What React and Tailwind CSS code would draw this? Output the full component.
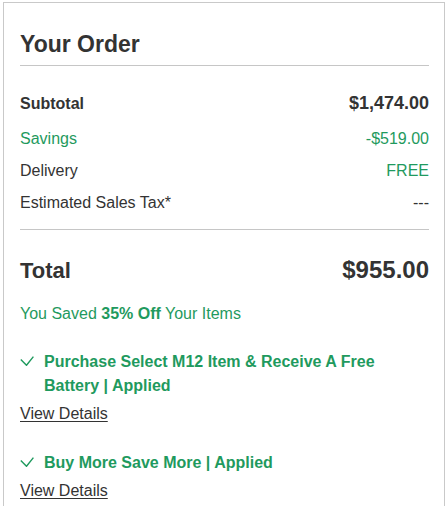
import React from "react";

/**
 * ORDER SUMMARY - painel "Your Order"
 * Totais, economia e promoções aplicadas
 */

const GREEN = "text-[#1f9a5e]";

function Check() {
  return (
    <svg width="14" height="10" viewBox="0 0 14 10" fill="none" className="shrink-0">
      <path d="M0.8 3.4 L6.5 9.3 L13.4 0.6" stroke="#1f9a5e" strokeWidth="1.4" />
    </svg>
  );
}

function Row({ label, value, labelClass, valueClass, className = "" }) {
  return (
    <div className={`flex items-baseline justify-between ${className}`}>
      <span className={`text-[16px] leading-[20px] ${labelClass}`}>{label}</span>
      <span className={`leading-[20px] ${valueClass}`}>{value}</span>
    </div>
  );
}

function Promo({ title, className = "" }) {
  return (
    <div className={className}>
      <div className="flex">
        <div className="flex h-[22px] w-[24px] shrink-0 items-center">
          <Check />
        </div>
        <p className={`text-[16px] font-bold leading-[24px] ${GREEN}`}>{title}</p>
      </div>
      <a href="#" className="mt-[6px] block text-[16px] leading-[20px] text-[#333] underline underline-offset-2">
        View Details
      </a>
    </div>
  );
}

export default function App() {
  return (
    <div className="min-h-screen bg-white pl-[3px] pr-[2px] pt-[2px] font-['Liberation_Sans',Arial,sans-serif]">
      <div className="border border-[#c9c9c9] pb-10 pl-4 pr-[15px] pt-[27px]">
        {/* Cabeçalho */}
        <h2 className="border-b border-[#c6c6c6] pb-[7px] text-[23px] font-bold leading-[28px] text-[#333]">
          Your Order
        </h2>

        {/* Linhas de valores */}
        <div className="border-b border-[#c6c6c6] pb-4 pt-[27px]">
          <Row
            label="Subtotal"
            value="$1,474.00"
            labelClass="font-bold text-[#333]"
            valueClass="text-[18px] font-bold text-[#333]"
          />
          <Row
            className="mt-[15px]"
            label="Savings"
            value="-$519.00"
            labelClass={GREEN}
            valueClass={`text-[16px] ${GREEN}`}
          />
          <Row
            className="mt-3"
            label="Delivery"
            value="FREE"
            labelClass="text-[#333]"
            valueClass={`text-[16px] ${GREEN}`}
          />
          <Row
            className="mt-3"
            label="Estimated Sales Tax*"
            value="---"
            labelClass="text-[#333]"
            valueClass="text-[16px] text-[#333]"
          />
        </div>

        {/* Total */}
        <div className="mt-[26px] flex items-baseline justify-between">
          <span className="text-[22px] font-bold leading-[28px] text-[#333]">Total</span>
          <span className="text-[24px] font-bold leading-[28px] text-[#333]">$955.00</span>
        </div>

        <p className={`mt-[19px] text-[16px] leading-[20px] ${GREEN}`}>
          You Saved <span className="font-bold">35% Off</span> Your Items
        </p>

        {/* Promoções aplicadas */}
        <Promo className="mt-[26px]" title="Purchase Select M12 Item & Receive A Free Battery | Applied" />
        <Promo className="mt-[27px]" title="Buy More Save More | Applied" />
      </div>
    </div>
  );
}
